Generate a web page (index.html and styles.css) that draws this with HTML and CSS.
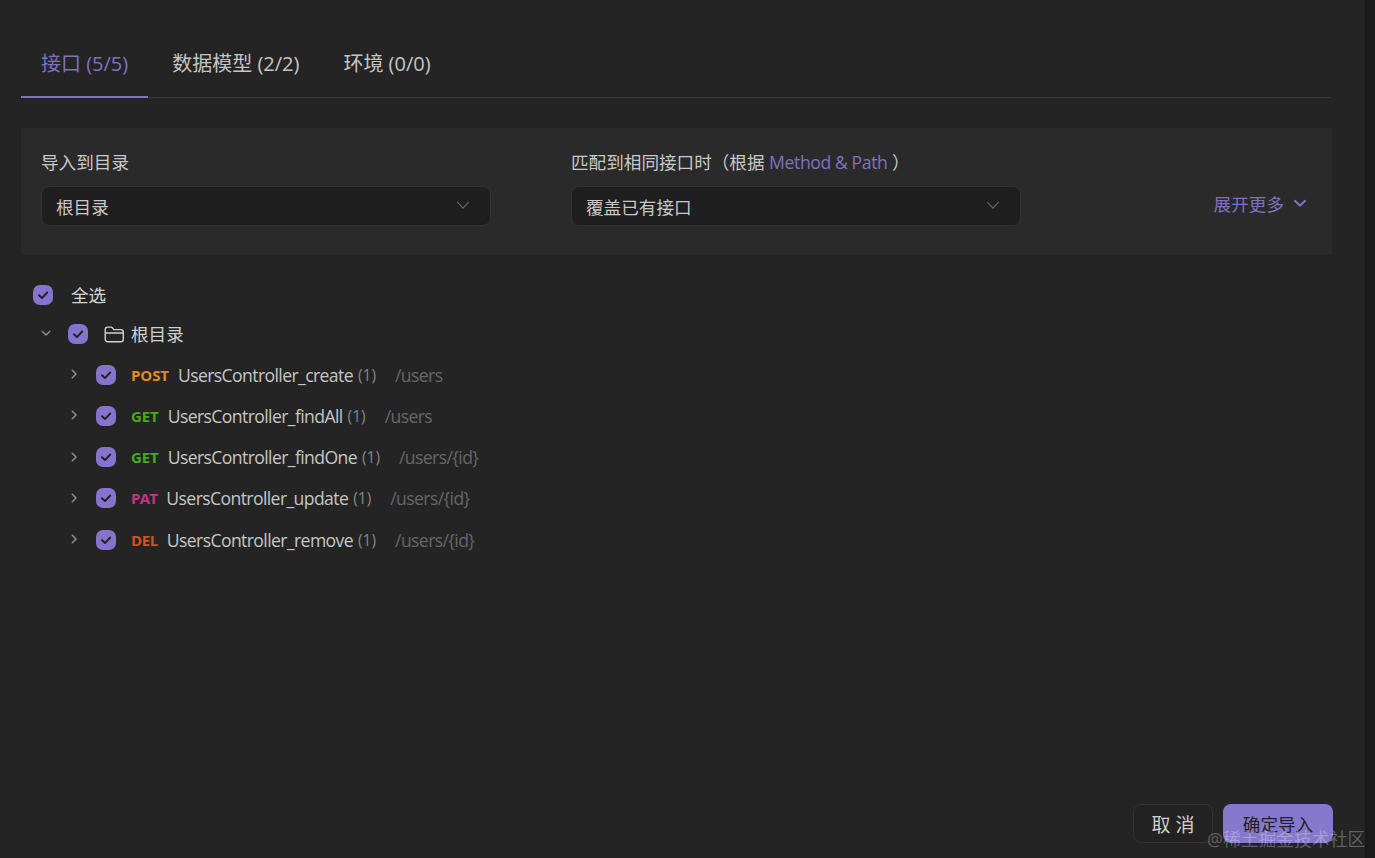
FILE: index.html
```html
<!DOCTYPE html>
<html lang="zh">
<head>
<meta charset="utf-8">
<title>导入</title>
<link rel="stylesheet" href="styles.css">
</head>
<body>
<svg class="defs" width="0" height="0" aria-hidden="true">
  <symbol id="check" viewBox="0 0 20 20"><path d="M6 10.200l3 2.900 5.200-5.600" fill="none" stroke="#222" stroke-width="1.900" stroke-linecap="round" stroke-linejoin="round"/></symbol>
  <symbol id="right" viewBox="0 0 12 12"><path d="M4.300 2.200L8 6l-3.700 3.800" fill="none" stroke="currentColor" stroke-width="1.500" stroke-linecap="round" stroke-linejoin="round"/></symbol>
  <symbol id="down" viewBox="0 0 12 12"><path d="M2.200 4.300L6 8l3.800-3.700" fill="none" stroke="currentColor" stroke-width="1.500" stroke-linecap="round" stroke-linejoin="round"/></symbol>
</svg>
<main class="page">
  <nav class="tabs">
    <a class="tab active">接口 (5/5)</a>
    <a class="tab">数据模型 (2/2)</a>
    <a class="tab">环境 (0/0)</a>
  </nav>
  <section class="panel">
    <div class="field">
      <label class="label">导入到目录</label>
      <div class="select"><span>根目录</span><svg class="caret" viewBox="0 0 14 14"><path d="M1.200 3.800L7 10.200l5.800-6.400" fill="none" stroke="currentColor" stroke-width="1.100"/></svg></div>
    </div>
    <div class="field">
      <label class="label">匹配到相同接口时（根据 <span class="accent">Method &amp; Path</span> ）</label>
      <div class="select"><span>覆盖已有接口</span><svg class="caret" viewBox="0 0 14 14"><path d="M1.200 3.800L7 10.200l5.800-6.400" fill="none" stroke="currentColor" stroke-width="1.100"/></svg></div>
    </div>
    <a class="more">展开更多<svg class="more-icon" viewBox="0 0 12 12"><use href="#down"/></svg></a>
  </section>
  <section class="tree">
    <div class="row row-all">
      <span class="box"><svg viewBox="0 0 20 20"><use href="#check"/></svg></span>
      <span class="all-text">全选</span>
    </div>
    <div class="row row-root">
      <svg class="arrow" viewBox="0 0 12 12"><use href="#down"/></svg>
      <span class="box"><svg viewBox="0 0 20 20"><use href="#check"/></svg></span>
      <svg class="folder" viewBox="0 0 22 18"><path d="M1.200 14V3.600C1.200 2.200 2.200 1.200 3.600 1.200h3.600c.8 0 1.300.4 1.800 1l1.200 1.600h7.400c1.600 0 2.700 1 2.700 2.600V14c0 1.600-1.100 2.700-2.700 2.700H3.900C2.300 16.700 1.200 15.600 1.200 14zM1.400 7.400h19.400" fill="none" stroke="currentColor" stroke-width="1.500"/></svg>
      <span class="root-text">根目录</span>
    </div>
    <div class="row row-item">
      <svg class="arrow" viewBox="0 0 12 12"><use href="#right"/></svg>
      <span class="box"><svg viewBox="0 0 20 20"><use href="#check"/></svg></span>
      <span class="method post">POST</span><span class="name">UsersController_create</span><span class="count">(1)</span><span class="path">/users</span>
    </div>
    <div class="row row-item">
      <svg class="arrow" viewBox="0 0 12 12"><use href="#right"/></svg>
      <span class="box"><svg viewBox="0 0 20 20"><use href="#check"/></svg></span>
      <span class="method get">GET</span><span class="name">UsersController_findAll</span><span class="count">(1)</span><span class="path">/users</span>
    </div>
    <div class="row row-item">
      <svg class="arrow" viewBox="0 0 12 12"><use href="#right"/></svg>
      <span class="box"><svg viewBox="0 0 20 20"><use href="#check"/></svg></span>
      <span class="method get">GET</span><span class="name">UsersController_findOne</span><span class="count">(1)</span><span class="path">/users/{id}</span>
    </div>
    <div class="row row-item">
      <svg class="arrow" viewBox="0 0 12 12"><use href="#right"/></svg>
      <span class="box"><svg viewBox="0 0 20 20"><use href="#check"/></svg></span>
      <span class="method pat">PAT</span><span class="name">UsersController_update</span><span class="count">(1)</span><span class="path">/users/{id}</span>
    </div>
    <div class="row row-item">
      <svg class="arrow" viewBox="0 0 12 12"><use href="#right"/></svg>
      <span class="box"><svg viewBox="0 0 20 20"><use href="#check"/></svg></span>
      <span class="method del">DEL</span><span class="name">UsersController_remove</span><span class="count">(1)</span><span class="path">/users/{id}</span>
    </div>
  </section>
  <footer class="footer">
    <button class="btn cancel">取 消</button>
    <button class="btn ok">确定导入</button>
  </footer>
</main>
<div class="watermark">@稀土掘金技术社区</div>
</body>
</html>
```
FILE: styles.css
```css
* { box-sizing: border-box; }
html, body { height: 100%; }
body {
  margin: 0;
  background: #1a1a1a;
  color: #cfcfcf;
  font-family: "Open Sans", "Noto Sans CJK SC", sans-serif;
  font-size: 17.6px;
  overflow: hidden;
}
.defs { position: absolute; }
.page {
  width: 1365px;
  height: 858px;
  background: #242424;
  padding: 31px 33px 15px 21px;
  display: flex;
  flex-direction: column;
}
.tabs {
  display: flex;
  height: 67px;
  margin-right: 2px;
  border-bottom: 1px solid #383838;
}
.tab {
  height: 67px;
  padding: 0 20px;
  margin-right: 4px;
  font-size: 20px;
  line-height: 66px;
  color: #c4c4c4;
  white-space: nowrap;
}
.tab.active {
  color: #7f71c0;
  border-bottom: 2px solid #7f71c0;
}
.panel {
  margin-top: 30px;
  height: 127px;
  background: #2a2a2a;
  padding: 20px 24px 0 20px;
  display: flex;
  gap: 80px;
}
.field { width: 450px; flex: none; }
.label {
  display: block;
  height: 38px;
  line-height: 28px;
  color: #c8c8c8;
  white-space: nowrap;
}
.accent { color: #7f71c0; letter-spacing: -0.4px; }
.more { color: #7f71c0; }
.select {
  height: 40px;
  background: #1f1f1f;
  border: 1px solid #333;
  border-radius: 8px;
  padding: 0 20px 0 14px;
  display: flex;
  align-items: center;
  justify-content: space-between;
  color: #c8c8c8;
}
.caret { width: 14px; height: 14px; color: #666; margin-top: -3px; }
.more {
  margin-left: auto;
  margin-top: 38px;
  height: 36px;
  line-height: 36px;
  display: flex;
  align-items: center;
  gap: 8px;
  white-space: nowrap;
}
.more-icon { width: 16px; height: 16px; margin-top: -2px; }
.tree { padding: 20px 0 0 0; flex: 1; }
.row { display: flex; align-items: center; white-space: nowrap; }
.box {
  width: 20px;
  height: 20px;
  border-radius: 7px;
  background: #8573cc;
  flex: none;
}
.box svg { display: block; width: 20px; height: 20px; }
.arrow { width: 12px; height: 12px; color: #8e8e8e; flex: none; margin-top: -1px; }
.row-all { height: 39px; padding-left: 12px; }
.all-text { margin-left: 18px; color: #d4d4d4; }
.row-root { height: 40px; padding-left: 19px; }
.row-root .box { margin-left: 16px; }
.row-root .arrow { margin-top: -3px; }
.folder { width: 21px; height: 17px; margin-left: 16px; color: #d0d0d0; flex: none; }
.root-text { margin-left: 6px; margin-top: -2px; color: #d0d0d0; }
.row-item { height: 41.25px; padding-left: 47px; }
.row-item .box { margin-left: 16px; }
.method { margin-left: 15px; font-size: 15px; font-weight: 700; margin-right: 9px; letter-spacing: -0.1px; }
.post { color: #e58a22; }
.get { color: #46a81f; }
.pat { color: #c5338a; letter-spacing: -0.7px; }
.del { color: #d9501f; letter-spacing: -0.4px; }
.name { color: #c6c6c6; letter-spacing: -0.6px; }
.count { margin-left: 5px; font-size: 15.5px; color: #868686; }
.path { margin-left: 19px; color: #666; letter-spacing: -0.6px; }
.footer { display: flex; justify-content: flex-end; gap: 10px; margin-right: -1px; }
.btn {
  height: 39px;
  border-radius: 8px;
  font-family: inherit;
  font-size: 17.6px;
  padding: 0;
}
.cancel { width: 80px; background: #222; border: 1px solid #333; color: #cfcfcf; font-size: 19px; }
.ok { width: 110px; background: #8678cd; border: 0; color: #222; }
.watermark {
  position: absolute;
  left: 1207px;
  top: 825px;
  color: rgba(255, 255, 255, 0.28);
  font-size: 17.8px;
  white-space: nowrap;
}
```
